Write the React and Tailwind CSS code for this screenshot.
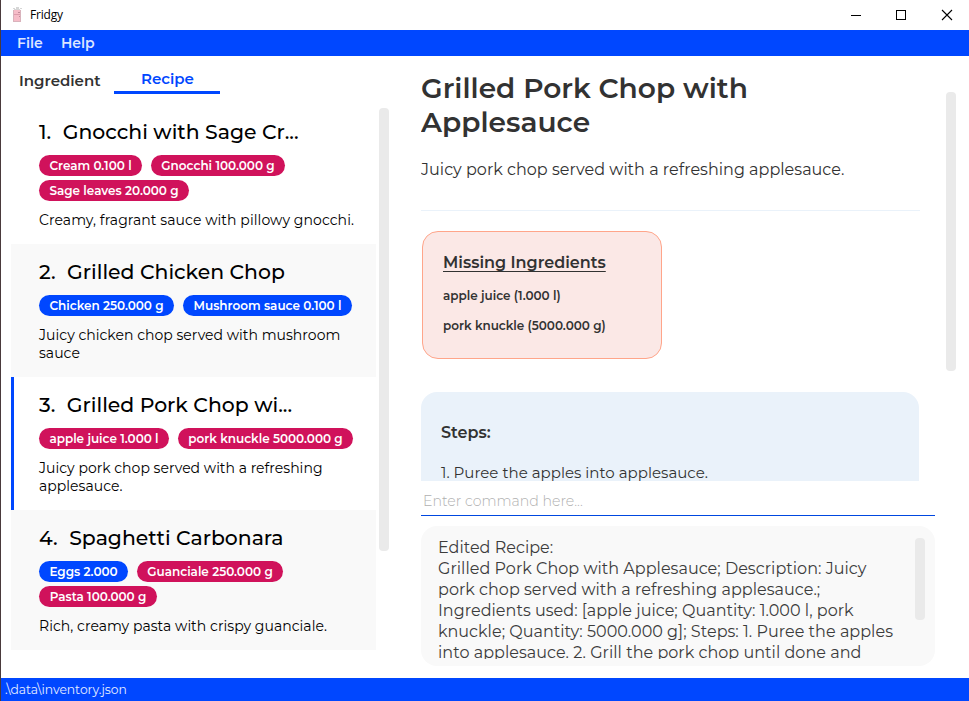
import React from "react";

const RED = "bg-[#d0125b]";
const BLUE = "bg-[#0047ff]";

const recipes = [
  {
    no: "1.",
    name: "Gnocchi with Sage Cr...",
    chips: [
      ["Cream 0.100 l", `${RED} w-[103px]`],
      ["Gnocchi 100.000 g", `${RED} w-[134px]`],
      ["Sage leaves 20.000 g", `${RED} w-[150px]`],
    ],
    desc: "Creamy, fragrant sauce with pillowy gnocchi.",
    descStyle: "tracking-[0.08px]",
  },
  {
    no: "2.",
    name: "Grilled Chicken Chop",
    chips: [
      ["Chicken 250.000 g", `${BLUE} w-[135px]`],
      ["Mushroom sauce 0.100 l", `${BLUE} w-[169px]`],
    ],
    desc: "Juicy chicken chop served with mushroom sauce",
    descStyle: "tracking-[0.03px]",
  },
  {
    no: "3.",
    name: "Grilled Pork Chop wi...",
    selected: true,
    chips: [
      ["apple juice 1.000 l", `${RED} w-[130px]`],
      ["pork knuckle 5000.000 g", `${RED} w-[175px]`],
    ],
    desc: "Juicy pork chop served with a refreshing applesauce.",
    descStyle: "tracking-[0.02px]",
  },
  {
    no: "4.",
    name: "Spaghetti Carbonara",
    chips: [
      ["Eggs 2.000", `${BLUE} w-[89px]`],
      ["Guanciale 250.000 g", `${RED} w-[146px]`],
      ["Pasta 100.000 g", `${RED} w-[118px]`],
    ],
    desc: "Rich, creamy pasta with crispy guanciale.",
    descStyle: "tracking-[0.04px]",
  },
];

const resultLines = [
  "Edited Recipe:",
  "Grilled Pork Chop with Applesauce; Description: Juicy",
  "pork chop served with a refreshing applesauce.;",
  "Ingredients used: [apple juice; Quantity: 1.000 l, pork",
  "knuckle; Quantity: 5000.000 g]; Steps: 1. Puree the apples",
  "into applesauce. 2. Grill the pork chop until done and",
];

function TitleBar() {
  return (
    <div className="flex h-[30px] shrink-0 items-center bg-white pl-[10px]">
      <svg width="12" height="16" viewBox="0 0 12 16" className="shrink-0" shapeRendering="crispEdges">
        <path d="M2 1h2v1H2zM5 0h3v2H5zM9 1h2v1H9zM3 2h6v1H3z" fill="#d6d6d6" />
        <rect x="2" y="3" width="8" height="12" fill="#f6bcc8" />
        <path d="M2.500 3v12M2 14.500h8M9.500 3v12" stroke="#d9b3bc" fill="none" />
        <path d="M3 7.500h6" stroke="#dd9bab" />
        <path d="M7 5.500h2M8.500 9v1" stroke="#c08b99" />
      </svg>
      <span className="ml-[7px] font-['Open_Sans',sans-serif] text-[12px] tracking-[-0.2px] text-black">Fridgy</span>
      <div className="ml-auto flex items-center pr-4">
        <svg width="102" height="12" viewBox="0 0 102 12" fill="none" stroke="#000">
          <path d="M0 6.500h10" />
          <rect x="45.500" y="1.500" width="9" height="9" />
          <path d="M91 1l10 10M101 1L91 11" strokeWidth="1.100" />
        </svg>
      </div>
    </div>
  );
}

function RecipeCell({ recipe, shaded }) {
  const tone = recipe.selected ? "border-[#0047ff] bg-white" : shaded ? "border-[#f9f9f9] bg-[#f9f9f9]" : "border-white bg-white";
  return (
    <div className={`w-[365px] border-l-[3px] pt-4 pb-[15px] pl-[25px] ${tone}`}>
      <div className="flex h-6 items-center text-[20.4px] leading-6 font-medium whitespace-nowrap text-black">
        <span>{recipe.no}</span>
        <span className="ml-[11.5px]">{recipe.name}</span>
      </div>
      <div className="mt-[11px] flex flex-wrap gap-x-[9px] gap-y-1">
        {recipe.chips.map(([label, style]) => (
          <span
            key={label}
            className={`flex h-[21px] items-center justify-center rounded-full text-[12px] font-semibold whitespace-nowrap text-white ${style}`}
          >
            {label}
          </span>
        ))}
      </div>
      <p className={`mt-[10px] w-[325px] text-[14px] leading-[18px] text-black ${recipe.descStyle}`}>{recipe.desc}</p>
    </div>
  );
}

function LeftPanel() {
  return (
    <div className="flex w-[420px] shrink-0 flex-col">
      <div className="flex h-[38px] shrink-0 text-[15px] font-semibold">
        <div className="w-[113px] pt-[14px] pl-[18px] leading-[22px] text-[#323232]">Ingredient</div>
        <div className="w-[106px] border-b-[3px] border-[#0047ff] pt-[12px] pl-px text-center leading-[22px] text-[#0047ff]">
          Recipe
        </div>
      </div>
      <div className="mt-[10px] flex pl-[10px]">
        <div>
          {recipes.map((r, i) => (
            <RecipeCell key={r.no} recipe={r} shaded={i % 2 === 1} />
          ))}
        </div>
        <div className="mt-1 ml-[3px] h-[443px] w-[10px] rounded bg-[#eaeaea]" />
      </div>
    </div>
  );
}

function RecipeDetail() {
  return (
    <div className="flex h-[425px] shrink-0 overflow-hidden">
      <div className="w-[499px] shrink-0 pt-[15px] text-[#323232]">
        <h1 className="w-[400px] text-[28px] leading-[34px] font-semibold tracking-[0.03px]">Grilled Pork Chop with Applesauce</h1>
        <p className="mt-[21px] text-[16px] leading-5 tracking-[0.02px]">Juicy pork chop served with a refreshing applesauce.</p>
        <div className="mt-[30px] h-px bg-[#eaf2fa]" />
        <div className="mt-5 ml-px h-[128px] w-[240px] rounded-2xl border border-[#ffa58a] bg-[#fbe8e6] pt-5 pl-5">
          <div className="text-[16px] leading-[22px] font-semibold underline decoration-1 underline-offset-[3px]">
            Missing Ingredients
          </div>
          <div className="mt-[7px] text-[12px] leading-[30px] font-semibold">
            <p>apple juice (1.000 l)</p>
            <p>pork knuckle (5000.000 g)</p>
          </div>
        </div>
        <div className="mt-[33px] h-[200px] w-[498px] rounded-2xl bg-[#eaf2fa] pt-[31px] pl-5">
          <div className="text-[16px] leading-5 font-semibold">Steps:</div>
          <p className="mt-5 text-[15px] leading-5 tracking-[0.015px]">1. Puree the apples into applesauce.</p>
        </div>
      </div>
      <div className="mt-9 ml-[26px] h-[279px] w-[10px] rounded bg-[#eaeaea]" />
    </div>
  );
}

function ResultBox() {
  return (
    <div className="mt-[10px] flex h-[140px] w-[514px] shrink-0 rounded-2xl bg-[#f9f9f9] pt-[11px] pl-[17px]">
      <div className="h-[122px] w-[477px] shrink-0 overflow-hidden text-[16px] leading-[21px] tracking-[0.03px] whitespace-nowrap text-[#3c3c3c]">
        {resultLines.map((line) => (
          <p key={line}>{line}</p>
        ))}
      </div>
      <div className="mt-px h-[82px] w-[10px] rounded bg-[#eaeaea]" />
    </div>
  );
}

export default function App() {
  return (
    <div className="flex h-[701px] w-[969px] flex-col overflow-hidden border-l border-[#4a3a3c] bg-white font-['Montserrat',sans-serif]">
      <TitleBar />
      <div className="flex h-[26px] shrink-0 items-center bg-[#0047ff] pl-4 text-[14px] font-semibold text-[#dbe5ff]">
        <span className="w-[44px]">File</span>
        <span>Help</span>
      </div>
      <div className="flex h-[622px] shrink-0">
        <LeftPanel />
        <div className="flex flex-1 flex-col">
          <RecipeDetail />
          <div className="flex h-[35px] w-[514px] shrink-0 items-center border-b border-[#0047e0] pt-[7px] pl-[2px] text-[14.15px] font-light text-[#b0b0b0]">
            Enter command here...
          </div>
          <ResultBox />
        </div>
      </div>
      <div className="flex h-[23px] shrink-0 items-center bg-[#0047ff] pt-px pl-1 text-[12.3px] text-[#e6edff]">
        .\data\inventory.json
      </div>
    </div>
  );
}
